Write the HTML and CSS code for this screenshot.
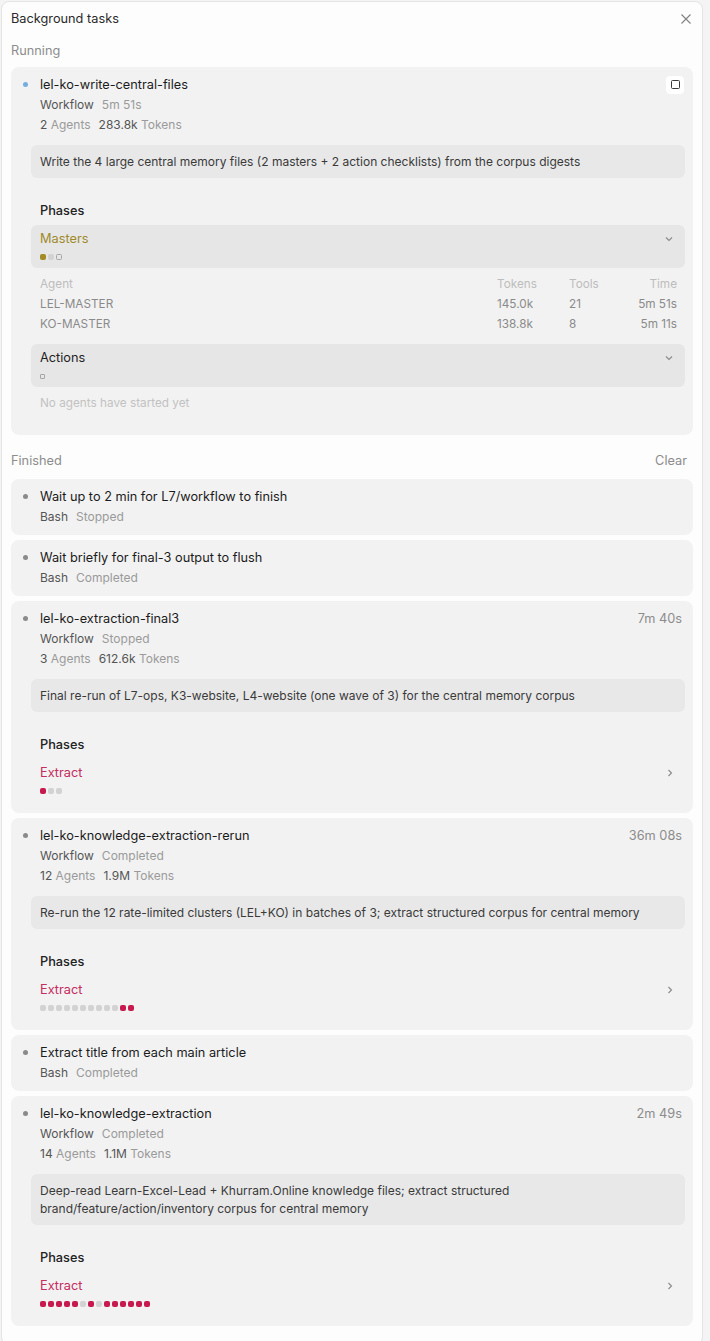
FILE: index.html
```html
<!DOCTYPE html>
<html>
  <head>
    <meta name="viewport" content="width=device-width, initial-scale=1.0" />
    <title>Background tasks</title>
    <link rel="stylesheet" href="styles.css">
  </head>
  <body>
    <div class="panel">
      <div class="panel-header">
        <span>Background tasks</span>
        <svg class="close" width="12" height="12" viewBox="0 0 12 12"><path d="M1.5 1.5 L10.5 10.5 M10.5 1.5 L1.5 10.5" /></svg>
      </div>

      <div class="section-label first">Running</div>
      <div class="task">
        <div class="task-head">
          <span class="dot running"></span>
          <span class="task-title">lel-ko-write-central-files</span>
          <span class="stop"><span class="stop-square"></span></span>
        </div>
        <div class="meta"><span class="num">Workflow</span><span>5m 51s</span></div>
        <div class="meta"><span><span class="num">2</span> Agents</span><span><span class="num">283.8k</span> Tokens</span></div>
        <div class="desc">Write the 4 large central memory files (2 masters + 2 action checklists) from the corpus digests</div>
        <div class="phases-label">Phases</div>
        <div class="phase open">
          <div class="phase-top"><span class="phase-name gold">Masters</span><svg class="chev" width="8" height="6" viewBox="0 0 8 6"><path d="M1 1.5 L4 4.5 L7 1.5" /></svg></div>
          <div class="pips"><span class="pip gold"></span><span class="pip"></span><span class="pip empty"></span></div>
        </div>
        <div class="agents">
          <div class="agent-row head"><span>Agent</span><span>Tokens</span><span>Tools</span><span class="right">Time</span></div>
          <div class="agent-row"><span>LEL-MASTER</span><span>145.0k</span><span>21</span><span class="right">5m 51s</span></div>
          <div class="agent-row"><span>KO-MASTER</span><span>138.8k</span><span>8</span><span class="right">5m 11s</span></div>
        </div>
        <div class="phase open">
          <div class="phase-top"><span class="phase-name">Actions</span><svg class="chev" width="8" height="6" viewBox="0 0 8 6"><path d="M1 1.5 L4 4.5 L7 1.5" /></svg></div>
          <div class="pips"><span class="pip empty small"></span></div>
        </div>
        <div class="empty-note">No agents have started yet</div>
      </div>

      <div class="section-label">
        <span>Finished</span>
        <span>Clear</span>
      </div>

      <div class="task">
        <div class="task-head">
          <span class="dot"></span>
          <span class="task-title">Wait up to 2 min for L7/workflow to finish</span>
        </div>
        <div class="meta"><span class="num">Bash</span><span>Stopped</span></div>
      </div>

      <div class="task">
        <div class="task-head">
          <span class="dot"></span>
          <span class="task-title">Wait briefly for final-3 output to flush</span>
        </div>
        <div class="meta"><span class="num">Bash</span><span>Completed</span></div>
      </div>

      <div class="task">
        <div class="task-head">
          <span class="dot"></span>
          <span class="task-title">lel-ko-extraction-final3</span>
          <span class="elapsed">7m 40s</span>
        </div>
        <div class="meta"><span class="num">Workflow</span><span>Stopped</span></div>
        <div class="meta"><span><span class="num">3</span> Agents</span><span><span class="num">612.6k</span> Tokens</span></div>
        <div class="desc">Final re-run of L7-ops, K3-website, L4-website (one wave of 3) for the central memory corpus</div>
        <div class="phases-label">Phases</div>
        <div class="phase">
          <div class="phase-top"><span class="phase-name red">Extract</span><svg class="chev" width="6" height="8" viewBox="0 0 6 8"><path d="M1.5 1 L4.5 4 L1.5 7" /></svg></div>
          <div class="pips"><span class="pip red"></span><span class="pip"></span><span class="pip"></span></div>
        </div>
      </div>

      <div class="task">
        <div class="task-head">
          <span class="dot"></span>
          <span class="task-title">lel-ko-knowledge-extraction-rerun</span>
          <span class="elapsed">36m 08s</span>
        </div>
        <div class="meta"><span class="num">Workflow</span><span>Completed</span></div>
        <div class="meta"><span><span class="num">12</span> Agents</span><span><span class="num">1.9M</span> Tokens</span></div>
        <div class="desc">Re-run the 12 rate-limited clusters (LEL+KO) in batches of 3; extract structured corpus for central memory</div>
        <div class="phases-label">Phases</div>
        <div class="phase">
          <div class="phase-top"><span class="phase-name red">Extract</span><svg class="chev" width="6" height="8" viewBox="0 0 6 8"><path d="M1.5 1 L4.5 4 L1.5 7" /></svg></div>
          <div class="pips">
            <span class="pip"></span><span class="pip"></span><span class="pip"></span><span class="pip"></span><span class="pip"></span>
            <span class="pip"></span><span class="pip"></span><span class="pip"></span><span class="pip"></span><span class="pip"></span>
            <span class="pip red"></span><span class="pip red"></span>
          </div>
        </div>
      </div>

      <div class="task">
        <div class="task-head">
          <span class="dot"></span>
          <span class="task-title">Extract title from each main article</span>
        </div>
        <div class="meta"><span class="num">Bash</span><span>Completed</span></div>
      </div>

      <div class="task">
        <div class="task-head">
          <span class="dot"></span>
          <span class="task-title">lel-ko-knowledge-extraction</span>
          <span class="elapsed">2m 49s</span>
        </div>
        <div class="meta"><span class="num">Workflow</span><span>Completed</span></div>
        <div class="meta"><span><span class="num">14</span> Agents</span><span><span class="num">1.1M</span> Tokens</span></div>
        <div class="desc">Deep-read Learn-Excel-Lead + Khurram.Online knowledge files; extract structured brand/feature/action/inventory corpus for central memory</div>
        <div class="phases-label">Phases</div>
        <div class="phase">
          <div class="phase-top"><span class="phase-name red">Extract</span><svg class="chev" width="6" height="8" viewBox="0 0 6 8"><path d="M1.5 1 L4.5 4 L1.5 7" /></svg></div>
          <div class="pips">
            <span class="pip red"></span><span class="pip red"></span><span class="pip red"></span><span class="pip red"></span><span class="pip red"></span>
            <span class="pip"></span><span class="pip red"></span><span class="pip"></span>
            <span class="pip red"></span><span class="pip red"></span><span class="pip red"></span><span class="pip red"></span><span class="pip red"></span><span class="pip red"></span>
          </div>
        </div>
      </div>
    </div>
  </body>
</html>
```

FILE: styles.css
```css
body {
  margin: 0;
  padding: 1px 7px 2px 1px;
  background-color: #f4f4f4;
  font-family: Inter, "Liberation Sans", sans-serif;
  font-size: 12.75px;
  color: #1f1f1f;
}

.panel {
  background-color: #fdfdfd;
  border: 1px solid #e4e4e4;
  border-radius: 8px;
  padding: 0 9px 13px 9px;
}

.panel-header {
  display: flex;
  justify-content: space-between;
  align-items: center;
  height: 33px;
  color: #2a2a2a;
}

.close {
  margin-right: 1px;
  fill: none;
  stroke: #808080;
  stroke-width: 1.1;
}

.section-label {
  display: flex;
  justify-content: space-between;
  line-height: 20px;
  margin: 16px 0 8px 0;
  padding-right: 6px;
  color: #8c8c8c;
}

.section-label.first {
  margin: 6px 0 6px 0;
}

.task {
  background-color: #f2f2f2;
  border-radius: 8px;
  padding: 7px 8px 8px 20px;
  margin-bottom: 5px;
}

.task-head {
  display: flex;
  align-items: center;
  line-height: 21px;
}

.dot {
  width: 5px;
  height: 5px;
  border-radius: 50%;
  background-color: #8a8a8a;
  margin-left: -8px;
  margin-right: 12px;
  flex: none;
}

.dot.running {
  background-color: #74aee0;
}

.task-title {
  flex: 1;
  color: #1c1c1c;
}

.elapsed {
  color: #8c8c8c;
  padding-right: 3px;
}

.stop {
  width: 18px;
  height: 18px;
  background-color: #fff;
  border-radius: 4px;
  display: flex;
  align-items: center;
  justify-content: center;
  margin-right: 1px;
}

.stop-square {
  width: 7px;
  height: 7px;
  border: 1.3px solid #3a3a3a;
  border-radius: 1.5px;
}

.meta {
  display: flex;
  gap: 8px;
  line-height: 20px;
  padding-left: 9px;
  color: #9a9a9a;
  font-size: 12px;
}

.meta .num {
  color: #555;
}

.desc {
  margin-top: 10px;
  background-color: #e8e8e8;
  border-radius: 6px;
  padding: 8px 9px 7px 9px;
  line-height: 18px;
  font-size: 12px;
  color: #3a3a3a;
}

.phases-label {
  margin-top: 22px;
  padding-left: 9px;
  line-height: 21px;
  font-weight: 500;
  color: #222;
}

.phase {
  margin-top: 4px;
  border-radius: 6px;
  padding: 4px 12px 8px 9px;
}

.phase.open {
  background-color: #e6e6e6;
}

.task > .phase:last-child {
  margin-bottom: 3px;
}

.phase-top {
  display: flex;
  justify-content: space-between;
  align-items: center;
  line-height: 20px;
}

.phase-name.gold {
  color: #a08a2c;
}

.phase-name.red {
  color: #c42d5e;
}

.chev {
  fill: none;
  stroke: #8a8a8a;
  stroke-width: 1.1;
}

.pips {
  display: flex;
  gap: 2px;
  margin-top: 5px;
  height: 6px;
  align-items: center;
}

.pip {
  width: 6px;
  height: 6px;
  border-radius: 2px;
  background-color: #d2d2d2;
}

.pip.gold {
  background-color: #a38b25;
}

.pip.red {
  background-color: #c8194f;
}

.pip.empty {
  background-color: transparent;
  border: 1px solid #a5a5a5;
  border-radius: 1.5px;
  width: 4px;
  height: 4px;
}

.pip.small {
  width: 3px;
  height: 3px;
  border-radius: 1px;
}

.agents {
  margin-top: 6px;
  padding: 0 8px 0 9px;
  margin-bottom: 10px;
}

.agent-row {
  display: grid;
  grid-template-columns: 1fr 72px 58px 50px;
  line-height: 20px;
  color: #8a8a8a;
  font-size: 11.75px;
}

.agent-row.head {
  color: #bdbdbd;
}

.agent-row .right {
  text-align: right;
}

.empty-note {
  margin: 6px 0 13px 0;
  padding-left: 9px;
  line-height: 21px;
  color: #c2c2c2;
  font-size: 11.75px;
}
```
